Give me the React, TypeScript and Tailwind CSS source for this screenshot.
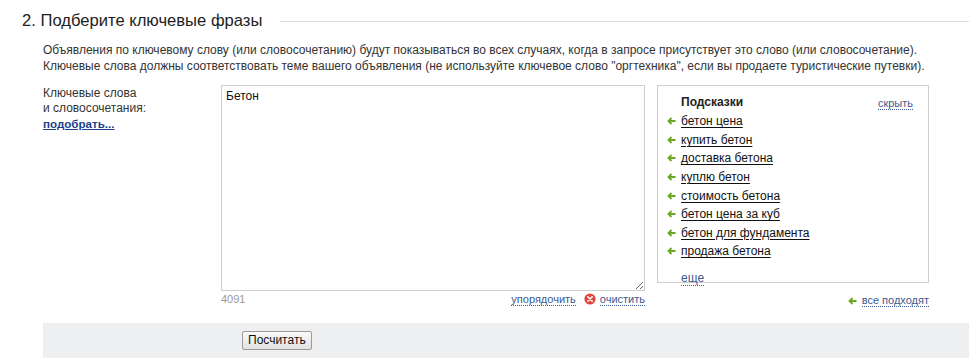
import React from "react";

const Arrow = () => (
  <svg width="9" height="8" viewBox="0 0 9 8" className="shrink-0">
    <path d="M8.5 4H2M4.5 1L1.5 4L4.5 7" fill="none" stroke="#6aa823" strokeWidth="1.8" />
  </svg>
);

const ClearIcon = () => (
  <svg width="12" height="12" viewBox="0 0 12 12" className="shrink-0">
    <circle cx="6" cy="6" r="5.6" fill="#e2463f" />
    <path d="M3.8 3.8L8.2 8.2M8.2 3.8L3.8 8.2" stroke="#fff" strokeWidth="1.6" strokeLinecap="round" />
  </svg>
);

const suggestions = [
  "бетон цена",
  "купить бетон",
  "доставка бетона",
  "куплю бетон",
  "стоимость бетона",
  "бетон цена за куб",
  "бетон для фундамента",
  "продажа бетона",
];

export default function App() {
  return (
    <div className="w-[969px] h-[363px] bg-white overflow-hidden text-[#222]" style={{ fontFamily: '"Liberation Sans", Arial, sans-serif' }}>
      {/* Title */}
      <div className="flex items-center pl-[22px] pt-[12px]">
        <h2 className="text-[16.6px] leading-[18px] text-[#222] whitespace-nowrap">2. Подберите ключевые фразы</h2>
        <div className="flex-1 h-px bg-[#dcdcdc] ml-[18px] mt-[1px]"></div>
      </div>

      <div className="pl-[43px]">
        {/* Description */}
        <div className="mt-[12px] text-[12px] leading-[16px] text-[#333]">
          <p>Объявления по ключевому слову (или словосочетанию) будут показываться во всех случаях, когда в запросе присутствует это слово (или словосочетание).</p>
          <p>Ключевые слова должны соответствовать теме вашего объявления (не используйте ключевое слово "оргтехника", если вы продаете туристические путевки).</p>
        </div>

        {/* Form row */}
        <div className="flex mt-[11px]">
          <div className="w-[178px] pt-[1px] text-[12px] leading-[15px] text-[#333]">
            <div>Ключевые слова</div>
            <div>и словосочетания:</div>
            <a href="#" className="font-bold text-[11.6px] text-[#1d3f8c] underline">подобрать...</a>
          </div>

          <div className="w-[424px] flex flex-col">
            <textarea
              defaultValue="Бетон"
              className="w-[424px] h-[206px] border border-[#cfcfcf] px-[4px] py-[3px] text-[12px] leading-[15px] text-[#111] outline-none"
              style={{ fontFamily: '"Liberation Sans", Arial, sans-serif' }}
            />
            <div className="flex items-center justify-between mt-[1px] text-[11px] leading-[14px]">
              <span className="text-[#999]">4091</span>
              <div className="flex items-center">
                <a href="#" className="text-[#3a5a8f] border-b border-dotted border-[#3a5a8f] leading-[12px]">упорядочить</a>
                <span className="ml-[8px] mr-[4px] flex"><ClearIcon /></span>
                <a href="#" className="text-[#3a5a8f] border-b border-dotted border-[#3a5a8f] leading-[12px]">очистить</a>
              </div>
            </div>
          </div>

          <div className="ml-[12px] w-[272px] flex flex-col">
            <div className="h-[198px] border border-[#cfcfcf] pl-[9px] pr-[15px] pt-[8px]">
              <div className="flex items-center justify-between pl-[14px]">
                <span className="text-[12px] leading-[15px] font-bold text-[#222]">Подсказки</span>
                <a href="#" className="text-[11px] leading-[12px] mt-[3px] text-[#3a5a8f] border-b border-dotted border-[#3a5a8f]">скрыть</a>
              </div>
              <ul className="mt-[2px]">
                {suggestions.map((s) => (
                  <li key={s} className="flex items-center gap-[5px] h-[18.57px] text-[12px]">
                    <Arrow />
                    <a href="#" className="text-[#111] underline underline-offset-2">{s}</a>
                  </li>
                ))}
              </ul>
              <div className="pl-[14px] mt-[10px] text-[12px] leading-[14px]">
                <a href="#" className="text-[#3a5a8f] border-b border-dotted border-[#3a5a8f]">еще</a>
              </div>
            </div>
            <div className="flex items-center justify-end mt-[11px] text-[11px] leading-[12px]">
              <Arrow />
              <a href="#" className="ml-[5px] text-[#3a5a8f] border-b border-dotted border-[#3a5a8f]">все подходят</a>
            </div>
          </div>
        </div>

        {/* Bottom bar */}
        <div className="mt-[16px] h-[35px] bg-[#eeeff0] flex items-center pl-[199px]">
          <button className="h-[19px] px-[5px] border border-[#9a9a9a] rounded-[2px] bg-gradient-to-b from-[#fafafa] to-[#e2e2e2] text-[12px] leading-[15px] text-[#111]" style={{ fontFamily: '"Liberation Sans Narrow", "Liberation Sans", Arial, sans-serif' }}>
            Посчитать
          </button>
        </div>
      </div>
    </div>
  );
}
